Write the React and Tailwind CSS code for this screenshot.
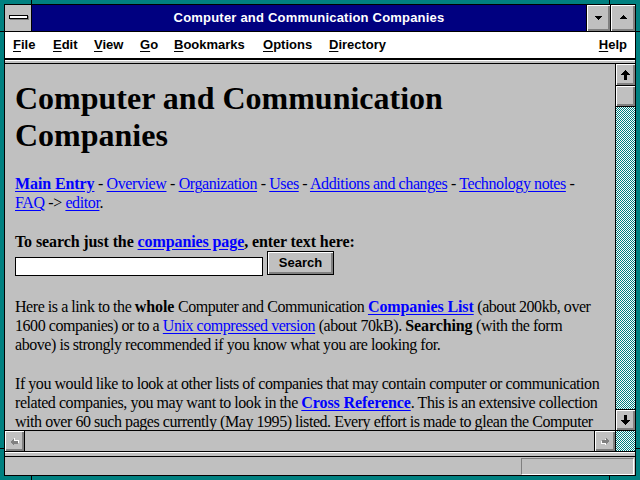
import React from "react";

const bevel =
  "bg-[#c0c0c0] shadow-[inset_1px_1px_0_#ffffff,inset_-1px_-1px_0_#808080,inset_-2px_-2px_0_#808080]";
const checker =
  "bg-[conic-gradient(#008080_25%,#ffffff_0_50%,#008080_0_75%,#ffffff_0)] bg-[length:2px_2px]";

function L({ children, b }) {
  return (
    <a className={"text-[#0000ff] underline underline-offset-[2px] " + (b ? "font-bold tracking-[-0.1px]" : "")}>
      {children}
    </a>
  );
}

function B({ children }) {
  return <span className="font-bold tracking-[-0.1px]">{children}</span>;
}

function Arrow({ rot = 0, fill = "#000" }) {
  return (
    <svg width="9" height="10" viewBox="0 0 9 10" shapeRendering="crispEdges" style={{ transform: `rotate(${rot}deg)` }}>
      <path d="M4.5 0 L9 5 H6 V10 H3 V5 H0 Z" fill={fill} />
    </svg>
  );
}

function SmallArrow({ rot }) {
  return (
    <svg width="9" height="9" viewBox="0 0 9 9" shapeRendering="crispEdges" style={{ transform: `rotate(${rot}deg)` }}>
      <path d="M5 1.5 L8.5 5 H6.5 V9 H3.5 V5 H1.5 Z" fill="#ffffff" />
      <path d="M4 0.5 L7.5 4 H5.5 V8 H2.5 V4 H0.5 Z" fill="#808080" />
    </svg>
  );
}

function MenuItem({ w, u, rest }) {
  return (
    <span className={w + " shrink-0"}>
      <span className="underline underline-offset-[2px]">{u}</span>
      {rest}
    </span>
  );
}

export default function App() {
  return (
    <div className="w-[640px] h-[480px] bg-[#008080] p-[4px] relative overflow-hidden font-['Liberation_Sans',Arial,sans-serif]">
      {/* frame ticks */}
      <div className="absolute left-[31px] top-0 w-px h-[4px] bg-black" />
      <div className="absolute left-[609px] top-0 w-px h-[4px] bg-black" />
      <div className="absolute left-[31px] bottom-0 w-px h-[4px] bg-black" />
      <div className="absolute left-[609px] bottom-0 w-px h-[4px] bg-black" />
      <div className="absolute left-0 top-[31px] w-[4px] h-px bg-black" />
      <div className="absolute right-0 top-[31px] w-[4px] h-px bg-black" />
      <div className="absolute left-0 top-[448px] w-[4px] h-px bg-black" />
      <div className="absolute right-0 top-[448px] w-[4px] h-px bg-black" />

      <div className="w-full h-full border border-black bg-[#c0c0c0] flex flex-col">
        {/* title bar */}
        <div className="h-[27px] flex border-b border-black shrink-0">
          <div className="w-[27px] border-r border-black bg-[#c0c0c0] flex items-center justify-center">
            <div className="w-[19px] h-[4px] bg-white border border-black shadow-[1px_1px_0_#808080] -mt-[2px]" />
          </div>
          <div className="flex-1 bg-[#000080] text-white font-bold text-[13px] flex items-center justify-center tracking-[0.2px]">
            Computer and Communication Companies
          </div>
          <div className={"w-[24px] border-l border-black flex items-center justify-center " + bevel}>
            <svg width="7" height="4" viewBox="0 0 7 4" shapeRendering="crispEdges" className="-mt-[1px]">
              <path d="M0 0 H7 L3.5 4 Z" fill="#000" />
            </svg>
          </div>
          <div className={"w-[25px] border-l border-black flex items-center justify-center " + bevel}>
            <svg width="7" height="4" viewBox="0 0 7 4" shapeRendering="crispEdges" className="-mt-[2px]">
              <path d="M0 4 H7 L3.5 0 Z" fill="#000" />
            </svg>
          </div>
        </div>

        {/* menu bar */}
        <div className="h-[28px] bg-white border-b-2 border-black flex items-center pl-[8px] pr-[8px] text-[13px] font-bold text-black shrink-0">
          <MenuItem w="w-[40px]" u="F" rest="ile" />
          <MenuItem w="w-[41px]" u="E" rest="dit" />
          <MenuItem w="w-[46px]" u="V" rest="iew" />
          <MenuItem w="w-[34px]" u="G" rest="o" />
          <MenuItem w="w-[89px]" u="B" rest="ookmarks" />
          <MenuItem w="w-[66px]" u="O" rest="ptions" />
          <MenuItem w="w-[80px]" u="D" rest="irectory" />
          <span className="ml-auto">
            <span className="underline underline-offset-[2px]">H</span>elp
          </span>
        </div>

        {/* collapsed toolbar strip */}
        <div className="h-[4px] bg-[#c0c0c0] border-t border-white border-b border-b-black shrink-0" />

        {/* content + vertical scrollbar */}
        <div className="flex-1 min-h-0 flex">
          <div className="flex-1 min-w-0 overflow-hidden pl-[10px] pt-[16px] text-black font-['Liberation_Serif','Times_New_Roman',serif] whitespace-nowrap">
            <div className="text-[32px] font-bold leading-[37px]">
              Computer and Communication
              <br />
              Companies
            </div>
            <div className="mt-[20px] text-[16px] leading-[19px] tracking-[-0.4px]">
              <L b>Main Entry</L> - <L>Overview</L> - <L>Organization</L> - <L>Uses</L> -{" "}
              <L>Additions and changes</L> - <L>Technology notes</L> -
              <br />
              <L>FAQ</L> -&gt; <L>editor</L>.
            </div>
            <div className="mt-[20px] text-[16px] leading-[19px] tracking-[-0.1px] font-bold">
              To search just the <L b>companies page</L>, enter text here:
            </div>
            <div className="flex items-end gap-[4px]">
              <div className="w-[248px] h-[19px] bg-white border border-black" />
              <div className="w-[67px] h-[24px] border border-black mb-[1px]">
                <div className={"w-full h-full flex items-center justify-center font-['Liberation_Sans',Arial,sans-serif] text-[13px] font-bold text-black " + bevel}>
                  Search
                </div>
              </div>
            </div>
            <div className="mt-[21px] text-[16px] leading-[19px] tracking-[-0.45px]">
              Here is a link to the <B>whole</B> Computer and Communication <L b>Companies List</L> (about 200kb, over
              <br />
              1600 companies) or to a <L>Unix compressed version</L> (about 70kB). <B>Searching</B> (with the form
              <br />
              above) is strongly recommended if you know what you are looking for.
            </div>
            <div className="mt-[20px] text-[16px] leading-[19px] tracking-[-0.45px]">
              If you would like to look at other lists of companies that may contain computer or communication
              <br />
              related companies, you may want to look in the <L b>Cross Reference</L>. This is an extensive collection
              <br />
              with over 60 such pages currently (May 1995) listed. Every effort is made to glean the Computer
            </div>
          </div>

          {/* vertical scrollbar */}
          <div className="w-[20px] border-l border-black flex flex-col shrink-0">
            <div className={"h-[22px] border-b border-black flex items-center justify-center shrink-0 " + bevel}>
              <Arrow />
            </div>
            <div className={"h-[21px] border-b border-black shrink-0 " + bevel} />
            <div className={"flex-1 " + checker} />
            <div className={"h-[21px] border-t border-black flex items-center justify-center shrink-0 " + bevel}>
              <Arrow rot={180} />
            </div>
          </div>
        </div>

        {/* horizontal scrollbar */}
        <div className="h-[21px] border-t border-black flex shrink-0">
          <div className={"w-[20px] border-r border-black flex items-center justify-center " + bevel}>
            <SmallArrow rot={-90} />
          </div>
          <div className="flex-1 bg-[#c0c0c0]" />
          <div className={"w-[21px] border-l border-black flex items-center justify-center " + bevel}>
            <SmallArrow rot={90} />
          </div>
          <div className={"w-[20px] border-l border-black " + checker} />
        </div>

        {/* separator */}
        <div className="h-[6px] border-t border-b border-black bg-[#c0c0c0] shadow-[inset_0_1px_0_#ffffff] shrink-0" />

        {/* status bar */}
        <div className="h-[18px] flex justify-end items-start pt-[1px] shrink-0">
          <div className="w-[113px] h-[17px] border-t border-l border-[#808080] border-b border-r border-b-white border-r-white mr-[1px]" />
        </div>
      </div>
    </div>
  );
}
